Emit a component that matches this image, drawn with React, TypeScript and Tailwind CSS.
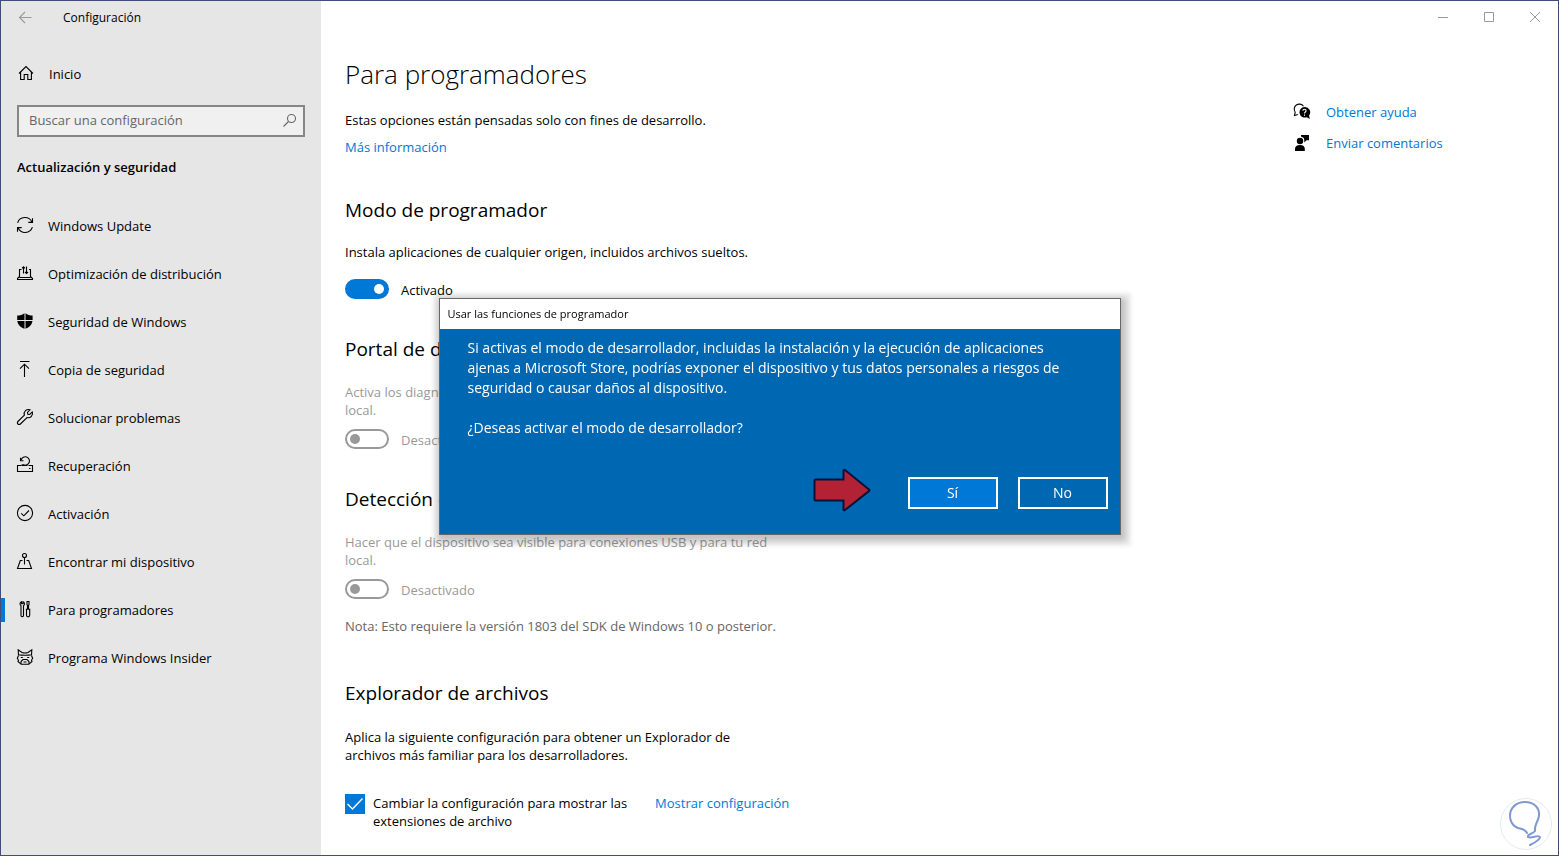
import type { ReactNode } from "react"

const iconProps = {
  width: 18,
  height: 18,
  viewBox: "0 0 18 18",
  fill: "none",
  stroke: "currentColor",
  strokeWidth: 1.1,
  "aria-hidden": true,
  className: "shrink-0",
}

function HomeIcon() {
  return (
    <svg {...iconProps}>
      <path d="M2 9.5 9 2.6l7 6.9M3.6 8v7.5h3.6v-5h3.6v5h3.6V8" />
    </svg>
  )
}

function UpdateIcon() {
  return (
    <svg {...iconProps}>
      <path d="M1.6 6.8A7.7 7.7 0 0 1 15.9 6M16.5 2.2v4.2h-4.2M16.4 11.2A7.7 7.7 0 0 1 2.1 12M1.5 15.8v-4.2h4.2" />
    </svg>
  )
}

function DeliveryIcon() {
  return (
    <svg {...iconProps}>
      <path d="M5.5 5.5h-2v7l-2 2v1h15v-1l-2-2v-7h-1.500M3.500 13.500h11" />
      <path d="M7.500 9.500v-7M6 4.300l1.500-1.500L9 4.300M10.500 2.500v7M9 8l1.500 1.500L12 8" />
    </svg>
  )
}

function ShieldIcon() {
  return (
    <svg {...iconProps} fill="currentColor" stroke="none">
      <path d="M8.5 1.200C6.500 2.800 4 3.500 1.200 3.500V8h7.300zM9.500 1.200c2 1.600 4.300 2.300 7.100 2.300V8H9.500zM1.300 9h7.200v7.800C4.600 15.300 1.700 12.800 1.300 9zM9.500 9h7c-.4 3.500-3.100 6.300-7 7.800z" />
    </svg>
  )
}

function BackupIcon() {
  return (
    <svg {...iconProps}>
      <path d="M4 1.500h9.500M8.500 17V4.300M4 8.600l4.500-4.400L13 8.600" />
    </svg>
  )
}

function WrenchIcon() {
  return (
    <svg {...iconProps}>
      <path d="M14 1.800a4.300 4.300 0 0 0-5.600 5.400L1.900 13.500a1.700 1.700 0 0 0 2.500 2.500l6.600-6.500a4.300 4.300 0 0 0 5.300-5.600l-2.600 2.600-1.900-.2-.3-1.900z" />
    </svg>
  )
}

function RecoveryIcon() {
  return (
    <svg {...iconProps}>
      <path d="M5.500 9.500h-4v6h15v-6h-4M13 12.500h1.500" />
      <path d="M7 9.800l-1.500-1M6.300 8.800h1.200A4.200 4.200 0 1 0 5.200 3.800M4.500 1.800v3h3M11.500 9.500h-5" />
    </svg>
  )
}

function ActivationIcon() {
  return (
    <svg {...iconProps}>
      <circle cx="9" cy="9" r="7.600" />
      <path d="m5.200 9.300 2.600 2.500 5.200-5.300" />
    </svg>
  )
}

function FindDeviceIcon() {
  return (
    <svg {...iconProps}>
      <circle cx="8.500" cy="3.500" r="2" />
      <path d="M8.500 5.500v7M6.500 8.500h-2.200L1.500 16.500h14l-2.800-8h-2.200" />
    </svg>
  )
}

function DeveloperIcon() {
  return (
    <svg {...iconProps}>
      <path d="M5.500 1.800a2.200 2.200 0 0 0-.5 3.900v9.700a1.200 1.200 0 0 0 2.500 0V5.700A2.200 2.200 0 0 0 7 1.800v2H5.500z" />
      <path d="M11 1.500h2v3l-.5 1v3.800h-1V5.500l-.5-1zM10.500 9.300h3.200v6a1.600 1.600 0 0 1-3.200 0zM9.800 9.300h4.500" />
    </svg>
  )
}

function InsiderIcon() {
  return (
    <svg {...iconProps}>
      <path d="M2.500 7.500 2.200 1.800l3.800 2.700q3 1 6 0l3.800-2.700-.3 5.700M2 6.800q7 1 14 0" />
      <path d="M2.500 7.500 1.300 10.500l1.200 1.500-.5 1.500 3.200 2.800h7.600l3.200-2.800-.5-1.500 1.200-1.500-1.200-3" />
      <path d="M5 16v-2.500l2-2h4l2 2V16M7.500 14h3M4.800 9.500h2M11.200 9.500h2" />
    </svg>
  )
}

function HelpIcon() {
  return (
    <svg {...iconProps}>
      <path d="M10.500 3.200A5 5 0 0 0 2.200 9.200L1.500 12.500 4.800 11.400" />
      <path d="M11.500 4a5.300 5.300 0 1 0 2.300 10.200l3 1.900-.7-3.600A5.300 5.300 0 0 0 11.500 4z" fill="currentColor" stroke="none" />
      <path d="M9.900 7.800c0-2 3.200-2 3.200 0 0 1.200-1.600 1.200-1.600 2.600M11.500 11.500v1.200" stroke="#fff" />
    </svg>
  )
}

function FeedbackIcon() {
  return (
    <svg {...iconProps} fill="currentColor" stroke="none">
      <circle cx="7" cy="7" r="3.200" />
      <path d="M2 17v-2.200C2 12.300 3.800 11 7 11s4.800 1.300 4.800 3.800V17zM8 1h8v5.300h-2.500L11.300 8.500V6.300L10.800 4 8 2.500z" />
    </svg>
  )
}

const navItems = [
  { icon: <UpdateIcon />, label: "Windows Update" },
  { icon: <DeliveryIcon />, label: "Optimización de distribución" },
  { icon: <ShieldIcon />, label: "Seguridad de Windows" },
  { icon: <BackupIcon />, label: "Copia de seguridad" },
  { icon: <WrenchIcon />, label: "Solucionar problemas" },
  { icon: <RecoveryIcon />, label: "Recuperación" },
  { icon: <ActivationIcon />, label: "Activación" },
  { icon: <FindDeviceIcon />, label: "Encontrar mi dispositivo" },
  { icon: <DeveloperIcon />, label: "Para programadores", active: true },
  { icon: <InsiderIcon />, label: "Programa Windows Insider" },
]

function Sidebar() {
  return (
    <aside className="w-80 shrink-0 bg-[#e6e6e6]">
      <div className="flex h-8 items-center gap-7 pl-4 pt-0.5">
        <button type="button" aria-label="Atrás" className="text-[#999]">
          <svg {...iconProps}>
            <path d="M14.500 8.500H3M8 3 2.500 8.500 8 14" />
          </svg>
        </button>
        <span className="text-xs">Configuración</span>
      </div>
      <a href="#inicio" className="mt-[17px] flex h-12 items-center gap-3.5 pl-4">
        <span className="pb-0.5">
          <HomeIcon />
        </span>
        Inicio
      </a>
      <label className="mx-4 mt-[7px] flex h-8 items-center border-2 border-[#868686] bg-[#f0f0f0] pl-2.5 pr-1">
        <input
          type="text"
          aria-label="Buscar una configuración"
          placeholder="Buscar una configuración"
          className="min-w-0 flex-1 bg-transparent pb-0.5 outline-none placeholder:text-[#666]"
        />
        <svg {...iconProps} className="shrink-0 text-[#666]">
          <circle cx="10.500" cy="6.500" r="4" />
          <path d="M7.500 9.500 2.500 14.500" />
        </svg>
      </label>
      <h2 className="mt-5 px-4 font-semibold leading-5">Actualización y seguridad</h2>
      <nav className="mt-[25px]">
        {navItems.map((item) => (
          <a
            key={item.label}
            href="#"
            aria-current={item.active ? "page" : undefined}
            className="flex h-12 items-center"
          >
            <span className={item.active ? "h-6 w-1 bg-[#0078d7]" : "h-6 w-1"} />
            <span className="ml-[11px] mr-3.5 pb-0.5">{item.icon}</span>
            {item.label}
          </a>
        ))}
      </nav>
    </aside>
  )
}

function WindowButtons() {
  return (
    <div className="flex h-8 justify-end text-[#999]">
      <button type="button" aria-label="Minimizar" className="flex w-[46px] items-center justify-center">
        <svg width="10" height="10" stroke="currentColor">
          <path d="M0 5.500h10" />
        </svg>
      </button>
      <button type="button" aria-label="Maximizar" className="flex w-[46px] items-center justify-center">
        <svg width="10" height="10" fill="none" stroke="currentColor">
          <path d="M.5.5h9v9h-9z" />
        </svg>
      </button>
      <button type="button" aria-label="Cerrar" className="flex w-[46px] items-center justify-center">
        <svg width="10" height="10" stroke="currentColor">
          <path d="m0 0 10 10M10 0 0 10" />
        </svg>
      </button>
    </div>
  )
}

function Heading({ children }: { children: ReactNode }) {
  return <h2 className="text-[19px] leading-7">{children}</h2>
}

function Toggle({ label, on = false }: { label: string; on?: boolean }) {
  return (
    <label className={on ? "flex items-center gap-3" : "flex items-center gap-3 text-[#999]"}>
      <input
        type="checkbox"
        role="switch"
        defaultChecked={on}
        disabled={!on}
        className="flex h-5 w-11 appearance-none items-center rounded-full border-2 border-[#999] px-[3px] before:size-2.5 before:rounded-full before:bg-[#999] checked:justify-end checked:border-[#0078d7] checked:bg-[#0078d7] checked:before:bg-white"
      />
      <span className="pt-0.5">{label}</span>
    </label>
  )
}

function Content() {
  return (
    <div className="max-w-[450px] grow">
      <h1 className="text-[26px] font-light leading-10">Para programadores</h1>
      <p className="mt-[17px]">Estas opciones están pensadas solo con fines de desarrollo.</p>
      <a href="#info" className="mt-[9px] inline-block text-[#0078d7]">
        Más información
      </a>

      <section className="mt-10">
        <Heading>Modo de programador</Heading>
        <p className="mb-[18px] mt-[19px]">Instala aplicaciones de cualquier origen, incluidos archivos sueltos.</p>
        <Toggle label="Activado" on />
      </section>

      <section className="mt-9">
        <Heading>Portal de dispositivos</Heading>
        <p className="mb-2.5 mt-5 text-[#999]">
          Activa los diagnósticos remotos en conexiones de red de área
          <br />
          local.
        </p>
        <Toggle label="Desactivado" />
      </section>

      <section className="mt-9">
        <Heading>Detección de dispositivos</Heading>
        <p className="mb-2.5 mt-5 text-[#999]">
          Hacer que el dispositivo sea visible para conexiones USB y para tu red
          <br />
          local.
        </p>
        <Toggle label="Desactivado" />
        <p className="mt-[18px] text-[#666]">Nota: Esto requiere la versión 1803 del SDK de Windows 10 o posterior.</p>
      </section>

      <section className="mt-11">
        <Heading>Explorador de archivos</Heading>
        <p className="mt-[21px]">
          Aplica la siguiente configuración para obtener un Explorador de
          <br />
          archivos más familiar para los desarrolladores.
        </p>
        <div className="mt-[30px] flex gap-7">
          <label className="flex items-start gap-2">
            <span className="grid shrink-0">
              <input
                type="checkbox"
                defaultChecked
                className="col-start-1 row-start-1 size-5 appearance-none border-2 border-[#333] checked:border-[#0078d7] checked:bg-[#0078d7]"
              />
              <svg
                viewBox="0 0 20 20"
                fill="none"
                stroke="#fff"
                strokeWidth={1.4}
                className="pointer-events-none col-start-1 row-start-1 size-5"
              >
                <path d="m2.500 10 5 5 10-10.500" />
              </svg>
            </span>
            <span>
              Cambiar la configuración para mostrar las
              <br />
              extensiones de archivo
            </span>
          </label>
          <a href="#mostrar" className="whitespace-nowrap text-[#0078d7]">
            Mostrar configuración
          </a>
        </div>
      </section>
    </div>
  )
}

function HelpLinks() {
  return (
    <ul className="mt-[49px] w-[265px] shrink-0 space-y-[13px]">
      <li className="flex items-center gap-[15px]">
        <HelpIcon />
        <a href="#ayuda" className="text-[#0078d7]">
          Obtener ayuda
        </a>
      </li>
      <li className="flex items-center gap-[15px]">
        <FeedbackIcon />
        <a href="#comentarios" className="text-[#0078d7]">
          Enviar comentarios
        </a>
      </li>
    </ul>
  )
}

function DeveloperDialog() {
  return (
    <div className="fixed inset-0 flex items-center justify-center pb-[23px]">
      <div
        role="dialog"
        aria-labelledby="dialog-title"
        className="w-[682px] border border-[#666] bg-[#0067b3] text-white shadow-[2px_3px_4px_8px_rgba(0,0,0,0.08),2px_3px_6px_3px_rgba(0,0,0,0.18)]"
      >
        <h2 id="dialog-title" className="bg-white px-2 text-[11px] leading-[30px] text-black">
          Usar las funciones de programador
        </h2>
        <div className="pb-[25px] pl-7 pr-3 pt-[9px]">
          <div className="text-sm leading-5">
            <p>
              Si activas el modo de desarrollador, incluidas la instalación y la ejecución de aplicaciones
              <br />
              ajenas a Microsoft Store, podrías exponer el dispositivo y tus datos personales a riesgos de
              <br />
              seguridad o causar daños al dispositivo.
            </p>
            <p className="mt-5">¿Deseas activar el modo de desarrollador?</p>
          </div>
          <div className="mt-[39px] flex justify-end gap-5">
            <div className="relative">
              <svg
                width="60"
                height="46"
                viewBox="0 0 60 46"
                aria-hidden
                className="absolute -top-2.5 right-full mr-9"
              >
                <path
                  d="M3 12.500h28.500V4q0-2 1.500-1L57 22.500q1 .8 0 1.600L33 43q-1.500 1-1.500-.5V33.500H3.500q-1 0-1-1V13.500q0-1 1-1z"
                  fill="#b22234"
                  stroke="#0a1238"
                  strokeWidth="2"
                />
              </svg>
              <button type="button" className="h-8 w-[90px] border-2 border-white bg-[#0078d7] text-sm">
                Sí
              </button>
            </div>
            <button type="button" className="h-8 w-[90px] border-2 border-white text-sm">
              No
            </button>
          </div>
        </div>
      </div>
    </div>
  )
}

function BulbLogo() {
  return (
    <svg
      width="52"
      height="52"
      viewBox="0 0 52 52"
      fill="none"
      aria-hidden
      className="fixed bottom-1.5 right-[7px]"
    >
      <circle cx="26" cy="26" r="25.500" fill="#fff" stroke="#e4e9f5" />
      <path
        d="M27 35c-2-4-6-4-9-5-6-2-8-8-8-12C10 9 17 4 25 4c9 0 15 6 14 14-1 6-5 9-4 15-2 3-8 3-7 6 3 2 11-3 12 0 0 3-6 6-10 8"
        stroke="#7f9ad0"
        strokeWidth="2"
        strokeLinecap="round"
      />
    </svg>
  )
}

export default function App() {
  return (
    <div className="flex min-h-screen border border-[#414d78] bg-white font-['Open_Sans','Noto_Sans',sans-serif] text-[13px] leading-[18px] text-black">
      <Sidebar />
      <main className="min-w-0 flex-1">
        <WindowButtons />
        <div className="flex justify-between gap-8 pb-6 pl-6 pt-[21px]">
          <Content />
          <HelpLinks />
        </div>
      </main>
      <DeveloperDialog />
      <BulbLogo />
    </div>
  )
}
